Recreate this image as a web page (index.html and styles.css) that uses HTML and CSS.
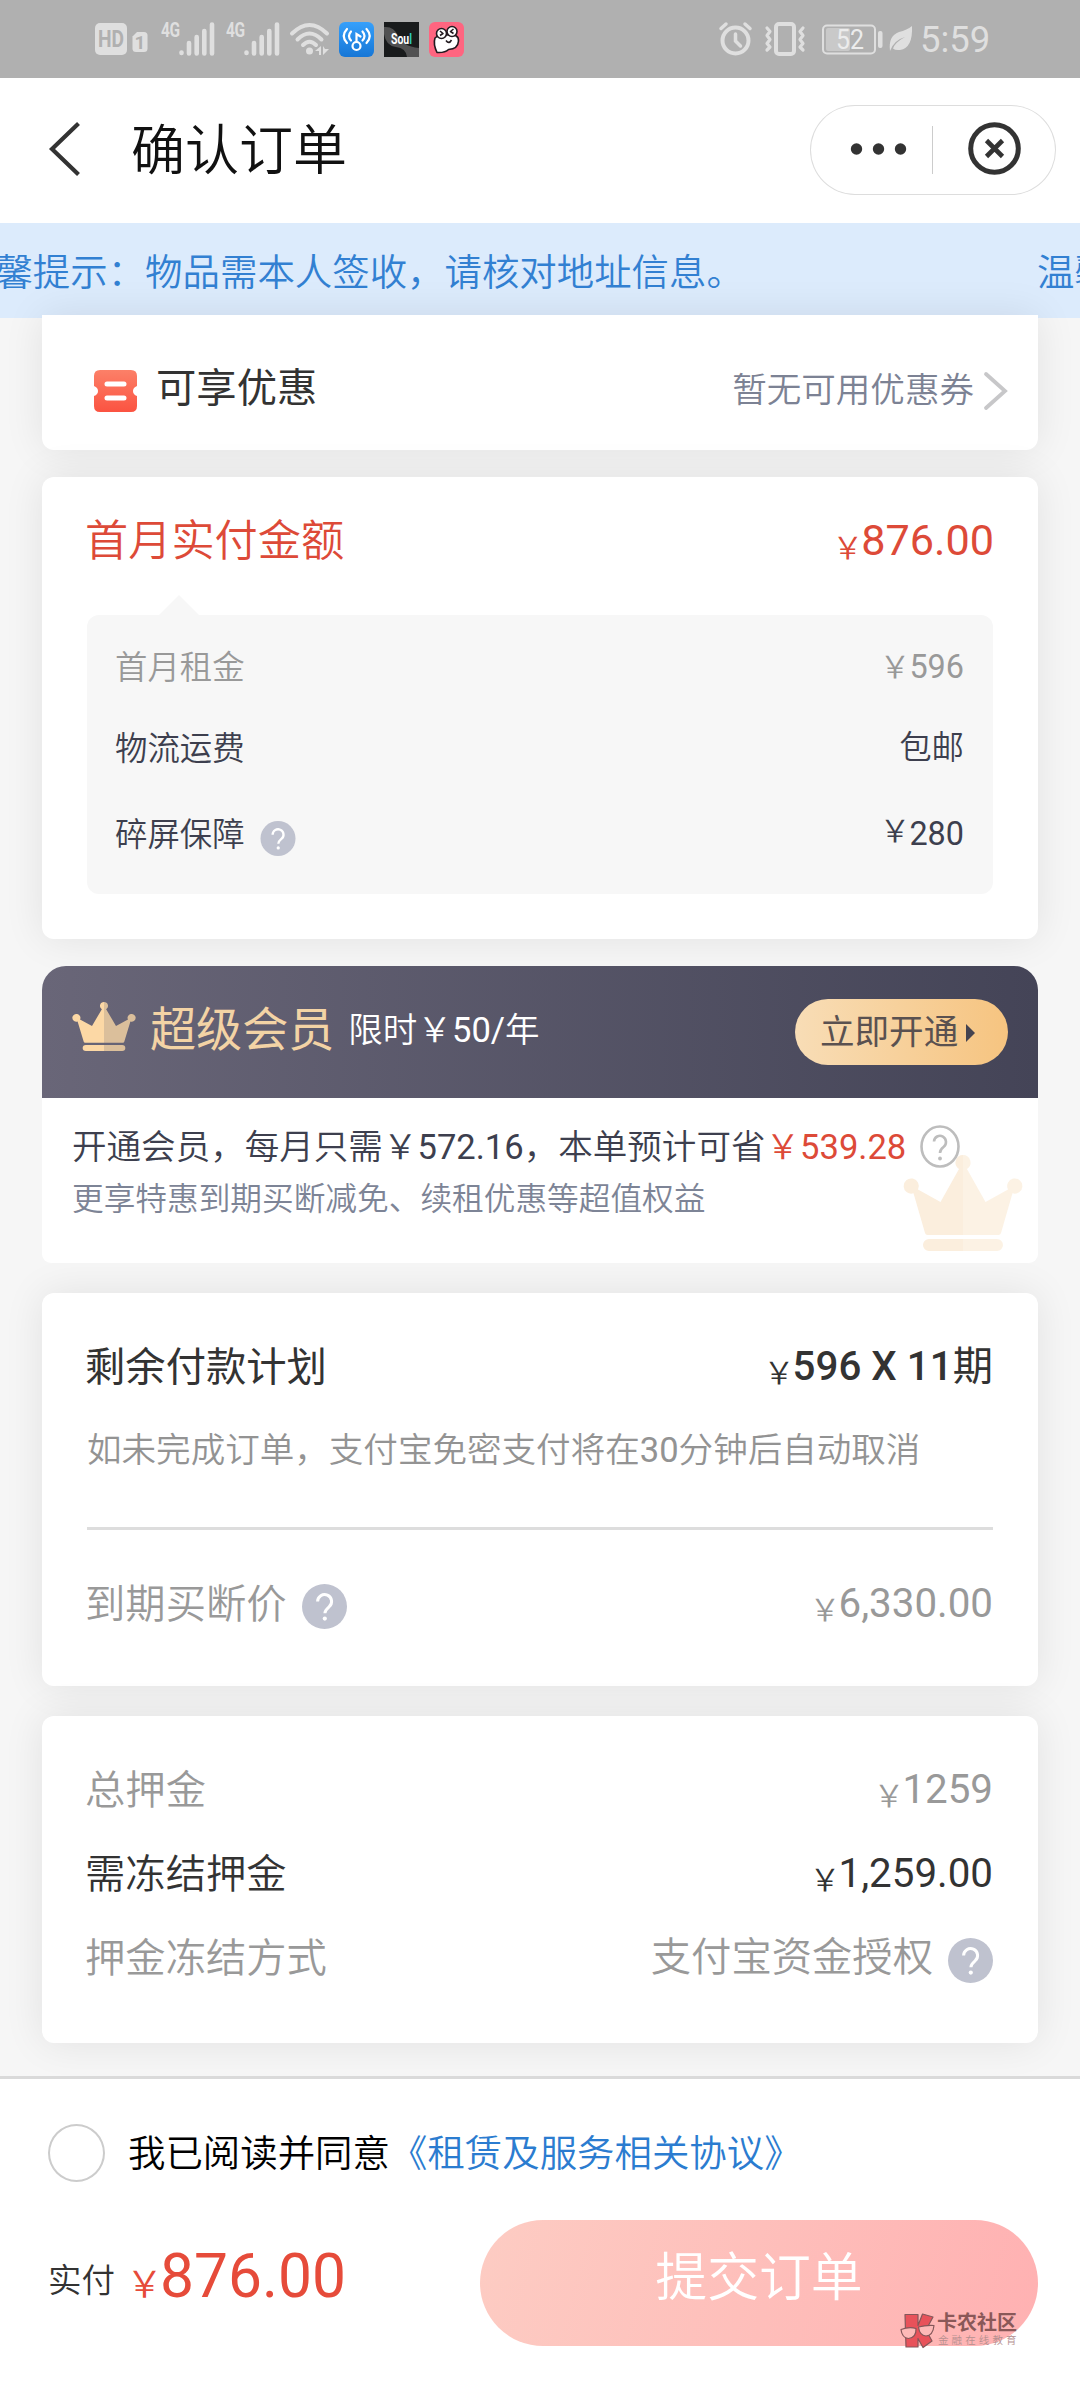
FILE: index.html
```html
<!DOCTYPE html>
<html lang="zh-CN">
<head>
<meta charset="utf-8">
<title>确认订单</title>
<link rel="stylesheet" href="styles.css">
</head>
<body>
<svg width="0" height="0" class="defs">
  <defs>
    <symbol id="help" viewBox="0 0 45 45">
      <circle cx="22.5" cy="22.5" r="22.5" fill="#bfc2cf"/>
      <path d="M15.6 17.600a7 6.900 0 1 1 11.600 5.100c-2.700 2.300-4.300 3.500-4.300 6.600" fill="none" stroke="#fff" stroke-width="3"/>
      <circle cx="22.800" cy="34.600" r="2.100" fill="#fff"/>
    </symbol>
    <symbol id="crown" viewBox="0 0 120 96" preserveAspectRatio="none">
      <path class="crown-left" d="M60 0a7.600 7.600 0 0 0-4 14L37.500 47 15 34.500a7.600 7.600 0 1 0-4.500 3.800L22 78q.6 2 2.500 2H60zM60 84H26a6 6 0 0 0 0 12H60z"/>
      <path class="crown-right" d="M60 0a7.600 7.600 0 0 1 4 14L82.500 47 105 34.500a7.600 7.600 0 1 1 4.500 3.800L98 78q-.6 2-2.500 2H60zM60 84h34a6 6 0 0 1 0 12H60z"/>
    </symbol>
    <symbol id="signal" viewBox="0 0 36 34">
      <path d="M2.500 30.500v.5M10 21v10.500M17.700 15v16.500M25.300 9v22.500M33 2.500v29" fill="none" stroke="#dfdfdf" stroke-width="4.600" stroke-linecap="round"/>
    </symbol>
  </defs>
</svg>

<div class="status">
  <svg class="hd" width="53" height="34" viewBox="0 0 53 34">
    <rect x="0" y="1" width="32" height="32" rx="5" fill="#dfdfdf"/>
    <text x="16" y="25" text-anchor="middle" textLength="26" lengthAdjust="spacingAndGlyphs" class="hd-text">HD</text>
    <path d="M42 10h7q3.500 0 3.500 3.500v13q0 3.500-3.500 3.500h-8q-3.500 0-3.500-3.500V14.500z" fill="#dfdfdf"/>
    <text x="45" y="27" text-anchor="middle" class="sim-text">1</text>
  </svg>
  <span class="net">4G</span>
  <svg width="36" height="34"><use href="#signal"/></svg>
  <span class="net net-2">4G</span>
  <svg width="36" height="34"><use href="#signal"/></svg>
  <svg class="wifi" width="40" height="34" viewBox="0 0 40 34">
    <g fill="none" stroke="#dfdfdf" stroke-width="4" stroke-linecap="round">
      <path d="M2 11.500Q19.500-5.500 37 11.500"/><path d="M7.500 17.500Q19.500 5.500 31.500 17.500"/><path d="M13 23Q19.500 16.500 26 23"/>
    </g>
    <circle cx="19.500" cy="29" r="3.500" fill="#dfdfdf"/>
    <path d="M31 24v9h-2v-4h-4zM33 24v9l6-6h-4z" fill="#dfdfdf"/>
  </svg>
  <svg class="app" width="35" height="35" viewBox="0 0 35 35">
    <defs><linearGradient id="blue" x2="0" y2="1"><stop stop-color="#36a0fb"/><stop offset="1" stop-color="#1676d6"/></linearGradient></defs>
    <rect width="35" height="35" rx="6" fill="url(#blue)"/>
    <g fill="none" stroke="#fff" stroke-width="2.200" stroke-linecap="round">
      <circle cx="17.500" cy="24" r="4"/><path d="M17.500 19.500V12l4 2.500M12 9.500q-4 4.500 0 9M8 7q-6.500 7 0 14M23.500 9.500q4 4.500 0 9M27.500 7q6.500 7 0 14"/>
    </g>
  </svg>
  <svg class="app" width="35" height="35" viewBox="0 0 35 35">
    <rect width="35" height="35" fill="#191b1c"/>
    <path d="M0 5q10-1 14 9t21 12v9H23Q22 26 12 25T0 12z" fill="#777" opacity=".6"/>
    <text x="7" y="22" textLength="21" lengthAdjust="spacingAndGlyphs" class="soul">Sou<tspan fill="#2fcdbb">l</tspan></text>
  </svg>
  <svg class="app" width="35" height="35" viewBox="0 0 35 35">
    <rect width="35" height="35" rx="6" fill="#ff6580"/>
    <g fill="#fff" stroke="#221a20" stroke-width="1.600" stroke-linejoin="round">
      <path d="M6 16q4-4 14-3 10-1 9.500 6-.5 8-10 8.500Q16 31 8 30.500 4 22 6 16z"/>
      <circle cx="12.500" cy="11.500" r="5"/><circle cx="23" cy="9.500" r="5"/>
      <path d="M11 9l3 2.500-3 2M24.500 7l-3 2.500 3 2M17 18.500q3 4 5.500-.5" fill="none"/>
    </g>
  </svg>
  <div class="status-right">
    <svg width="33" height="34" viewBox="0 0 33 34">
      <circle cx="16.500" cy="18.500" r="13" fill="none" stroke="#dfdfdf" stroke-width="4"/>
      <path d="M16.500 12v7l5 5M2 6.500L7 2M31 6.500L26 2" fill="none" stroke="#dfdfdf" stroke-width="3.500" stroke-linecap="round"/>
    </svg>
    <svg class="vibrate" width="42" height="34" viewBox="0 0 42 34">
      <rect x="12" y="2" width="18" height="30" rx="3" fill="none" stroke="#dfdfdf" stroke-width="4"/>
      <path d="M3 6l3 3.500-3 4 3 4-3 4 3 3.500-3 3M39 6l-3 3.500 3 4-3 4 3 4-3 3.500 3 3" fill="none" stroke="#dfdfdf" stroke-width="3.200" stroke-linecap="round" stroke-linejoin="round"/>
    </svg>
    <svg class="battery" width="61" height="34" viewBox="0 0 61 34">
      <rect x="1" y="3.500" width="52" height="28" rx="4" fill="none" stroke="#dfdfdf" stroke-width="2"/>
      <rect x="4" y="6" width="24" height="23" rx="2" fill="#c9c9c9"/>
      <rect x="56" y="9" width="4.500" height="17" rx="2" fill="#dfdfdf"/>
      <text x="28" y="26.500" text-anchor="middle" textLength="28" lengthAdjust="spacingAndGlyphs" class="battery-text">52</text>
    </svg>
    <svg class="leaf" width="24" height="26" viewBox="0 0 24 26">
      <path d="M1 25Q-1 10 10 6q8-2 13-6 1 22-12 24-5 .5-7-1.500 2-6 12-11.500Q5 14 1 25z" fill="#dfdfdf"/>
    </svg>
    <span class="clock">5:59</span>
  </div>
</div>

<header class="header">
  <svg width="32" height="54" viewBox="0 0 32 54"><path d="M29.500 1.500L3 27l26.500 25.500" fill="none" stroke="#333" stroke-width="4.200"/></svg>
  <h1 class="title">确认订单</h1>
  <div class="capsule">
    <svg width="246" height="90" viewBox="0 0 246 90">
      <g fill="#333"><circle cx="46.500" cy="44" r="5.700"/><circle cx="68.500" cy="44" r="5.700"/><circle cx="90.500" cy="44" r="5.700"/></g>
      <path d="M122.500 21v48" stroke="#ccc"/>
      <circle cx="184.500" cy="43.500" r="23.800" fill="none" stroke="#333" stroke-width="5"/>
      <path d="M176.500 35.500l16 16M192.500 35.500l-16 16" stroke="#333" stroke-width="4.600"/>
    </svg>
  </div>
</header>

<div class="notice"><span>温馨提示：物品需本人签收，请核对地址信息。</span><span>温馨提示：物品需本人签收，请核对地址信息。</span></div>

<main class="main">
  <section class="card coupon">
    <svg width="43" height="42" viewBox="0 0 43 42">
      <defs><linearGradient id="red" x2="0" y2="1"><stop stop-color="#fc8068"/><stop offset="1" stop-color="#fb5341"/></linearGradient></defs>
      <path d="M6 0h31q6 0 6 6v10q-4 1.500-4 5t4 5v10q0 6-6 6H6q-6 0-6-6V26q4-1.500 4-5t-4-5V6q0-6 6-6z" fill="url(#red)"/>
      <path d="M13 14h17M13 28h17" stroke="#fff" stroke-width="5" stroke-linecap="round"/>
    </svg>
    <span class="coupon-name">可享优惠</span>
    <span class="coupon-state">暂无可用优惠券</span>
    <svg width="24" height="38" viewBox="0 0 24 38"><path d="M2 2l19 17L2 36" fill="none" stroke="#c7c7c9" stroke-width="3.800" stroke-linecap="round"/></svg>
  </section>

  <section class="card first-pay">
    <div class="first-head"><span>首月实付金额</span><span class="first-sum"><i class="yen">￥</i>876.00</span></div>
    <div class="detail">
      <div class="detail-row muted"><span>首月租金</span><span class="num"><i class="yen-row">￥</i>596</span></div>
      <div class="detail-row"><span>物流运费</span><span>包邮</span></div>
      <div class="detail-row insure"><span>碎屏保障</span><svg class="help-small" width="36" height="35"><use href="#help"/></svg><span class="num"><i class="yen-row yen-up">￥</i>280</span></div>
    </div>
  </section>

  <section class="vip">
    <div class="vip-head">
      <svg class="crown" width="64" height="49"><use href="#crown"/></svg>
      <span class="vip-name">超级会员</span>
      <span class="vip-price">限时￥<i class="num">50/</i>年</span>
      <span class="vip-button">立即开通<svg width="9" height="18" viewBox="0 0 9 18"><path d="M0 0l9 9-9 9z" fill="#444350"/></svg></span>
    </div>
    <div class="vip-body">
      <svg class="crown crown-faint" width="120" height="96"><use href="#crown"/></svg>
      <div class="vip-line"><span>开通会员，每月只需￥<i class="num">572.16</i>，本单预计可省<i class="save">￥<i class="num">539.28</i></i></span>
        <svg width="40" height="43" viewBox="0 0 40 43"><ellipse cx="20" cy="21.500" rx="18.500" ry="20" fill="none" stroke="#bdbdbd" stroke-width="2.600"/><path d="M14 16.500a6 6.200 0 1 1 9.500 5.500c-2.600 2-3.500 3-3.500 6" fill="none" stroke="#bdbdbd" stroke-width="2.600"/><circle cx="20" cy="33.500" r="1.900" fill="#bdbdbd"/></svg>
      </div>
      <div class="vip-sub">更享特惠到期买断减免、续租优惠等超值权益</div>
    </div>
  </section>

  <section class="card plan">
    <div class="row plan-head"><span>剩余付款计划</span><span><i class="yen">￥</i><i class="strong">596 X 11</i>期</span></div>
    <p class="plan-note">如未完成订单，支付宝免密支付将在<i class="num">30</i>分钟后自动取消</p>
    <div class="row muted buyout"><span>到期买断价</span><svg class="help" width="45" height="45"><use href="#help"/></svg><span class="end num"><i class="yen">￥</i>6,330.00</span></div>
  </section>

  <section class="card deposit">
    <div class="row muted"><span>总押金</span><span class="num"><i class="yen">￥</i>1259</span></div>
    <div class="row"><span>需冻结押金</span><span class="num"><i class="yen">￥</i>1,259.00</span></div>
    <div class="row muted"><span>押金冻结方式</span><span class="end">支付宝资金授权</span><svg class="help" width="45" height="45"><use href="#help"/></svg></div>
  </section>
</main>

<footer class="footer">
  <div class="agree"><span class="radio"></span><span>我已阅读并同意<a class="link">《租赁及服务相关协议》</a></span></div>
  <div class="pay">
    <span class="pay-label">实付</span><span class="pay-sum"><i class="pay-yen">￥</i>876.00</span>
    <div class="submit">提交订单
      <div class="watermark">
        <svg width="35" height="35" viewBox="0 0 35 35">
          <g stroke="#84575a" stroke-width="1.200" stroke-linejoin="round">
            <path d="M5 1.500h13v11L22.500 1l10.500 3-7 13 6 11-9 6.500-5-9v8.500H6z" fill="#e8525a"/>
            <path d="M1 16.500q8-3 15-1 .5 9-7.500 10-6.500-.5-7.500-9zM18.500 14q7-2 15.500-1.500-1 10-8 10.500-6.500-.5-7.500-9z" fill="#fdb9b7"/>
          </g>
        </svg>
        <div><div class="wm-name">卡农社区</div><div class="wm-sub">金融在线教育</div></div>
      </div>
    </div>
  </div>
</footer>
</body>
</html>
```
FILE: styles.css
```css
* { box-sizing: border-box; }
body {
  margin: 0;
  width: 1080px;
  height: 2400px;
  display: flex;
  flex-direction: column;
  overflow: hidden;
  background: #f6f6f6;
  color: #333;
  font-family: Roboto, "Noto Sans CJK SC", sans-serif;
  font-weight: 350;
  line-height: 1;
}
i { font-style: normal; }
svg { display: block; flex: none; overflow: visible; }
.defs { position: absolute; }
span { white-space: nowrap; }
.num { font-weight: 400; }

.status {
  flex: none;
  height: 78px;
  padding: 0 91px 0 95px;
  display: flex;
  align-items: center;
  background: #b0b0b0;
  color: #dfdfdf;
  font-weight: 400;
}
.hd-text { font: 700 24px Roboto; fill: #b0b0b0; }
.sim-text { font: 700 19px Roboto; fill: #b0b0b0; }
.net {
  width: 18px;
  margin: -18px 0 0 13px;
  font: 700 21px/20px Roboto;
  letter-spacing: -.5px;
  transform: scaleX(.74);
  transform-origin: left;
}
.net-2 { margin-left: 11px; }
.wifi { margin-left: 10px; }
.app { margin-left: 9px; }
.app + .app { margin-left: 10px; }
.soul { font: 700 15px Roboto; fill: #fff; }
.status-right { margin-left: auto; display: flex; align-items: center; }
.vibrate { margin-left: 12px; }
.battery { margin-left: 16px; }
.battery-text { font: 400 27px Roboto; fill: #ececec; }
.leaf { margin-left: 6px; }
.clock { margin: 2px 2px 0 7px; font-size: 36.500px; width: 67px; }

.header {
  flex: none;
  height: 145px;
  padding: 0 24px 0 49px;
  display: flex;
  align-items: center;
  background: #fff;
}
.header > svg { margin-top: -4px; }
.title {
  margin: 0 0 0 50px;
  font-size: 54px;
  font-weight: 350;
  line-height: 145px;
  padding-top: 2px;
  color: #111;
}
.capsule {
  width: 246px;
  height: 90px;
  margin: -1px 0 0 auto;
  border-radius: 45px;
  box-shadow: inset 0 0 0 1px #ddd;
}

.notice {
  flex: none;
  height: 95px;
  display: flex;
  gap: 293px;
  overflow: hidden;
  background: #dcebfc;
  color: #3280d2;
  font-size: 37.440px;
  line-height: 101px;
}
.notice span { flex: none; }
.notice span:first-child { margin-left: -42px; }

.main {
  flex: none;
  height: 1761px;
  margin-top: -3px;
  padding: 0 42px;
}
.card {
  background: #fff;
  border-radius: 12px;
  box-shadow: 0 0 40px rgba(0, 0, 0, .085);
}
.muted { color: #999; }
.yen {
  margin-right: -2px;
  font-size: 31px;
  font-weight: 350;
  line-height: 0;
  vertical-align: -4px;
}

.coupon {
  height: 135px;
  padding: 16px 30px 0 52px;
  display: flex;
  align-items: center;
  border-radius: 0 0 12px 12px;
}
.coupon-name { margin: -4px 0 0 19px; font-size: 40.320px; font-weight: 400; line-height: 60px; }
.coupon-state { margin: -1px 10px 0 auto; font-size: 34.560px; line-height: 60px; color: #7c8294; }

.first-pay {
  height: 462px;
  margin-top: 27px;
  padding: 0 45px;
}
.first-head {
  height: 138px;
  display: flex;
  justify-content: space-between;
  font-size: 43.200px;
  line-height: 127px;
  color: #dd4a38;
}
.first-head > span:first-child { margin: 1px 0 0 -2px; }
.first-sum { margin-right: -1px; font-weight: 400; }
.detail {
  position: relative;
  height: 279px;
  padding: 12px 29px 0;
  border-radius: 12px;
  background: #f7f7f7;
  color: #3d3f4e;
  font-size: 32.400px;
}
.detail::before {
  content: "";
  position: absolute;
  left: 72px;
  top: -20px;
  border: 20px solid transparent;
  border-width: 0 20px 20px;
  border-bottom-color: #f7f7f7;
}
.detail-row {
  height: 81px;
  display: flex;
  justify-content: space-between;
  align-items: center;
  line-height: 81px;
}
.detail .muted { color: #999; }
.detail-row > span:first-child { margin: 2px 0 0 -1px; }
.insure { margin-top: 5px; }
.insure > span:last-child { margin-left: auto; }
.yen-row { margin-right: -1px; font-size: 31px; font-weight: 350; line-height: 0; }
.yen-up { vertical-align: 3px; }
.help-small { margin: 7px 0 0 15px; }

.vip { margin-top: 27px; }
.vip-head {
  height: 132px;
  padding: 0 30px;
  display: flex;
  align-items: center;
  border-radius: 24px 24px 0 0;
  background: linear-gradient(90deg, #696678, #444457);
}
.crown { margin-top: -12px; fill: #fcd8a5; }
.crown-left { fill: inherit; }
.crown-right { fill: inherit; opacity: .78; }
.vip-name { margin: -5px 0 0 14px; font-size: 46.080px; font-weight: 400; color: #f3d3a5; line-height: 70px; }
.vip-price { margin: -5px 0 0 14px; font-size: 34.560px; color: #fff; line-height: 70px; }
.vip-button {
  width: 213px;
  height: 66px;
  margin-left: auto;
  padding-left: 25px;
  display: flex;
  align-items: center;
  gap: 8px;
  border-radius: 33px;
  background: linear-gradient(90deg, #f8ddb6, #f6c480);
  color: #5a5150;
  font-size: 34.560px;
  font-weight: 400;
  line-height: 60px;
}
.vip-button svg { margin-top: 2px; }
.vip-body {
  position: relative;
  height: 165px;
  padding: 18px 30px 0;
  border-radius: 0 0 9px 9px;
  background: #fff;
}
.crown-faint {
  position: absolute;
  right: 15px;
  top: 57px;
  margin: 0;
  fill: #fbeedd;
}
.vip-line {
  height: 61px;
  position: relative;
  display: flex;
  align-items: center;
  gap: 14px;
  color: #3d3f4e;
  font-size: 34.560px;
  line-height: 62px;
}
.save { color: #dd4a38; }
.vip-sub { font-size: 31.680px; line-height: 45px; color: #7d8496; }

.plan {
  height: 393px;
  margin-top: 30px;
  padding: 32px 45px 0;
}
.row {
  height: 84px;
  display: flex;
  justify-content: space-between;
  align-items: center;
  font-size: 40.320px;
  line-height: 84px;
}
.row .end { margin-left: auto; }
.plan-head { font-weight: 400; }
.strong { font-weight: 500; }
.plan-note {
  height: 121px;
  margin: 0;
  border-bottom: 3px solid #ddd;
  font-size: 34.560px;
  line-height: 82px;
  color: #939393;
}
.buyout { margin-top: 32px; }
.help { margin: 5px 0 0 15px; }
.row > span:first-child { margin: 1px 0 0 -2px; }

.deposit {
  height: 327px;
  margin-top: 30px;
  padding: 32px 45px 0;
}

.footer {
  flex: 1;
  padding: 0 42px 0 48px;
  border-top: 3px solid #dadada;
  background: #fff;
}
.agree {
  height: 141px;
  padding-top: 7px;
  display: flex;
  align-items: center;
  gap: 23px;
  font-size: 37.440px;
  line-height: 80px;
  color: #000;
}
.agree > span:last-child { margin-top: 2px; }
.radio { width: 57px; height: 58px; border: 2.500px solid #ccc; border-radius: 50%; }
.link { color: #2b7cd0; }
.pay { height: 126px; display: flex; align-items: center; }
.pay-label { margin-top: -5px; font-size: 33.500px; line-height: 80px; }
.pay-sum { margin: -12px 0 0 11px; font-size: 60.480px; font-weight: 400; line-height: 100px; color: #e64b3a; }
.pay-yen { margin-right: -3px; font-size: 37px; font-weight: 350; line-height: 0; vertical-align: -1px; }
.submit {
  position: relative;
  width: 558px;
  height: 126px;
  margin-left: auto;
  border-radius: 63px;
  background: linear-gradient(105deg, #fdccc3, #ffb1b2);
  color: #fff;
  font-size: 51.840px;
  line-height: 118px;
  text-align: center;
}
.watermark {
  position: absolute;
  left: 420px;
  top: 93px;
  display: flex;
  gap: 2px;
  color: #8a5858;
  line-height: 1;
  text-align: left;
}
.wm-name { font-size: 20px; font-weight: 700; line-height: 20px; }
.wm-sub { padding-left: 1px; font-size: 10.500px; letter-spacing: 3.100px; line-height: 15px; color: #b58f8f; white-space: nowrap; }
```
